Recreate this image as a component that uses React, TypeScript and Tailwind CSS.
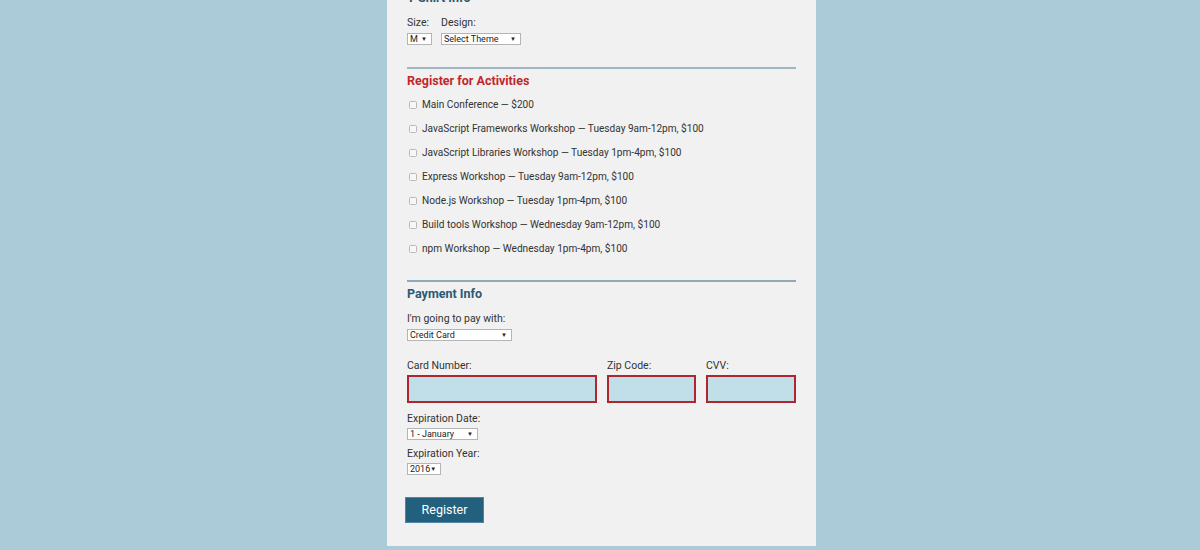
const activities = [
  "Main Conference — $200",
  "JavaScript Frameworks Workshop — Tuesday 9am-12pm, $100",
  "JavaScript Libraries Workshop — Tuesday 1pm-4pm, $100",
  "Express Workshop — Tuesday 9am-12pm, $100",
  "Node.js Workshop — Tuesday 1pm-4pm, $100",
  "Build tools Workshop — Wednesday 9am-12pm, $100",
  "npm Workshop — Wednesday 1pm-4pm, $100",
];

const FakeSelect = ({ value, width }: { value: string; width: string }) => (
  <div
    className={`${width} h-[12px] flex items-center justify-between border border-[#b5b5b5] bg-white pl-[2px] pr-[4px] text-[9px] leading-none text-[#222]`}
  >
    <span>{value}</span>
    <span className="text-[6px]">▼</span>
  </div>
);

const Label = ({ children }: { children: string }) => (
  <p className="h-[13px] text-[10.5px] leading-[13px] text-[#333]">{children}</p>
);

export default function App() {
  return (
    <div className="h-[550px] overflow-hidden bg-[#abcbd8] font-['Roboto',sans-serif] flex justify-center pl-[3px]">
      <div className="w-[429px] h-fit -mt-[9px] bg-[#f1f1f1] px-[20px] pb-[23px]">
        <h2 className="h-[14px] text-[12.5px] leading-[14px] font-bold text-[#2b5a73]">
          T-Shirt Info
        </h2>

        <div className="mt-[11px] flex gap-[9px]">
          <div>
            <Label>Size:</Label>
            <div className="mt-[4px]">
              <FakeSelect value="M" width="w-[25px]" />
            </div>
          </div>
          <div>
            <Label>Design:</Label>
            <div className="mt-[4px]">
              <FakeSelect value="Select Theme" width="w-[80px]" />
            </div>
          </div>
        </div>

        <hr className="mt-[22px] h-[2px] border-0 bg-[#9fb6c1]" />

        <h2 className="mt-[4px] h-[16px] text-[12.5px] leading-[16px] font-bold text-[#c1272d]">
          Register for Activities
        </h2>

        <div className="mt-[4px]">
          {activities.map((a) => (
            <div key={a} className="h-[24px] flex items-center">
              <span className="ml-[2px] mr-[5px] h-[8px] w-[8px] rounded-[1.5px] border border-[#b9b9b9] bg-[#f7f7f7]" />
              <span className="text-[10.1px] text-[#333]">{a}</span>
            </div>
          ))}
        </div>

        <hr className="mt-[19px] h-[2px] border-0 bg-[#8fa9b6]" />

        <h2 className="mt-[4px] h-[16px] text-[12.5px] leading-[16px] font-bold text-[#2b5a73]">
          Payment Info
        </h2>

        <div className="mt-[10px]">
          <Label>I'm going to pay with:</Label>
        </div>
        <div className="mt-[4px]">
          <FakeSelect value="Credit Card" width="w-[105px]" />
        </div>

        <div className="mt-[18px] flex gap-[10px]">
          <div className="w-[190px]">
            <Label>Card Number:</Label>
            <div className="mt-[3px] h-[28px] border-2 border-[#b1262c] bg-[#c1dfe8]" />
          </div>
          <div className="w-[89px]">
            <Label>Zip Code:</Label>
            <div className="mt-[3px] h-[28px] border-2 border-[#b1262c] bg-[#c1dfe8]" />
          </div>
          <div className="w-[90px]">
            <Label>CVV:</Label>
            <div className="mt-[3px] h-[28px] border-2 border-[#b1262c] bg-[#c1dfe8]" />
          </div>
        </div>

        <div className="mt-[9px]">
          <Label>Expiration Date:</Label>
        </div>
        <div className="mt-[3px]">
          <FakeSelect value="1 - January" width="w-[71px]" />
        </div>

        <div className="mt-[7px]">
          <Label>Expiration Year:</Label>
        </div>
        <div className="mt-[3px]">
          <FakeSelect value="2016" width="w-[34px]" />
        </div>

        <button className="mt-[22px] -ml-[2px] h-[26px] w-[79px] border border-[#4f86a8] bg-[#22607e] text-[12.5px] text-white">
          Register
        </button>
      </div>
    </div>
  );
}
